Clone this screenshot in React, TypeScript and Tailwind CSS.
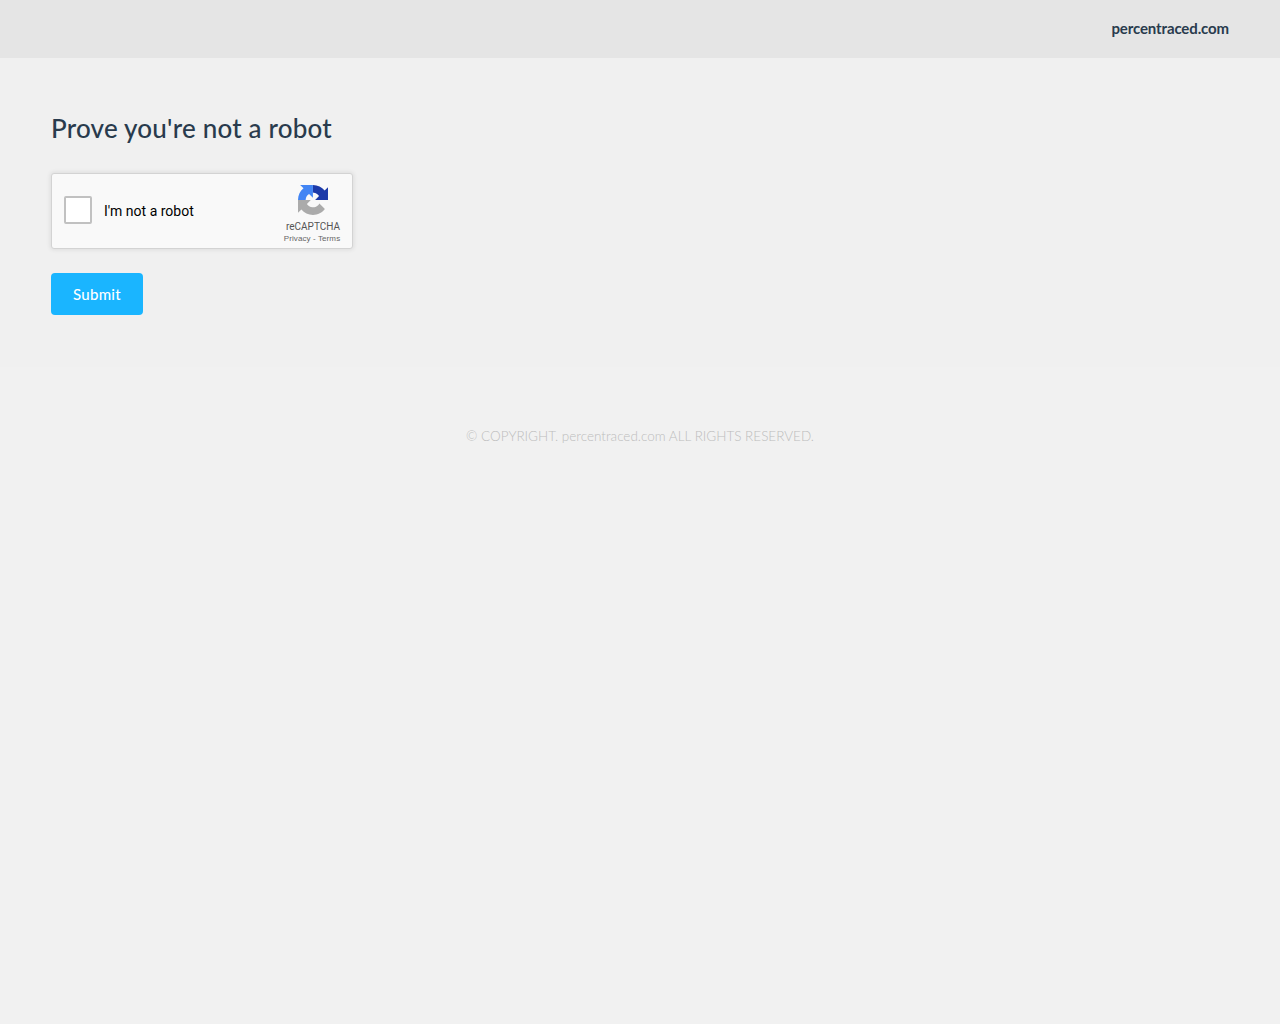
const nunito = "font-['Lato','Noto_Sans',sans-serif]";

function RecaptchaLogo() {
  return (
    <svg width="30" height="30" viewBox="0 0 64 64" aria-hidden="true">
      <path fill="#ababab" d="M.001 31.955l.033 1.37v25.898l7.16-7.16c5.86 7.173 14.775 11.754 24.757 11.754 10.4 0 19.622-4.96 25.458-12.64l-11.736-11.86a15.55 15.55 0 0 1-4.754 5.334c-2.05 1.6-4.952 2.906-8.968 2.906-.485 0-.86-.057-1.137-.163-4.976-.393-9.288-3.14-11.828-7.124l8.307-8.307L.001 31.955" />
      <path fill="#4285f4" d="M31.862.001l-1.37.033H4.594l7.16 7.16C4.58 13.053 0 21.968 0 31.95h16.26c0-.485.057-.86.163-1.137.393-4.976 3.14-9.288 7.124-11.828l8.307 8.307L31.86.001" />
      <path fill="#1c3aa9" d="M64 31.955l-.033-1.37V4.687l-7.16 7.16C50.948 4.674 42.033.093 32.05.093L31.9 16.2c.485 0 .86.057 1.137.163 4.976.393 9.288 3.14 11.828 7.124l-8.307 8.307L64 31.953" />
    </svg>
  );
}

export default function App() {
  return (
    <div className={`${nunito} flex min-h-screen flex-col bg-[#f1f1f1]`}>
      <header className="flex h-[58px] items-center justify-end bg-[#e5e5e5] pr-[51px]">
        <span className="-mt-[2px] text-[15px] font-bold tracking-[-0.12px] text-[#293b4d]">percentraced.com</span>
      </header>

      <main className="h-[309px] bg-[#f0f0f0] px-[51px] pt-[52px]">
        <h1 className="text-[26px] leading-[36px] font-medium tracking-[0.21px] text-[#293b4d]">Prove you're not a robot</h1>

        <div className="mt-[27px] flex h-[76px] w-[302px] items-center rounded-[3px] border border-[#d3d3d3] bg-[#f9f9f9] pr-[10px] pl-3 shadow-[0_0_4px_1px_rgba(0,0,0,0.08)]">
          <div className="-mt-[2px] h-7 w-7 rounded-[2px] border-2 border-[#c1c1c1] bg-white" />
          <span className="ml-3 font-['Roboto',sans-serif] text-sm text-black">I'm not a robot</span>
          <div className="ml-auto flex w-[58px] flex-col items-center pt-[7px] font-['Roboto',sans-serif] text-[#555]">
            <RecaptchaLogo />
            <span className="mt-[5px] text-[10px] leading-[14px]">reCAPTCHA</span>
            <span className="-ml-[2px] font-['Liberation_Sans',sans-serif] text-[8px] leading-[10px] tracking-[0.1px] whitespace-nowrap text-[#666]">Privacy - Terms</span>
          </div>
        </div>

        <button type="button" className="mt-6 h-[42px] w-[92px] rounded-[4px] bg-[#1ab5ff] text-[15px] font-medium tracking-[0.3px] text-white">
          Submit
        </button>
      </main>

      <footer className="flex-1 pt-[59px] pb-4 text-center text-[13.5px] leading-[20px] font-light text-[#bdbdbd]">
        <p className="opacity-[0.99]">© COPYRIGHT. percentraced.com ALL RIGHTS RESERVED.</p>
      </footer>
    </div>
  );
}
